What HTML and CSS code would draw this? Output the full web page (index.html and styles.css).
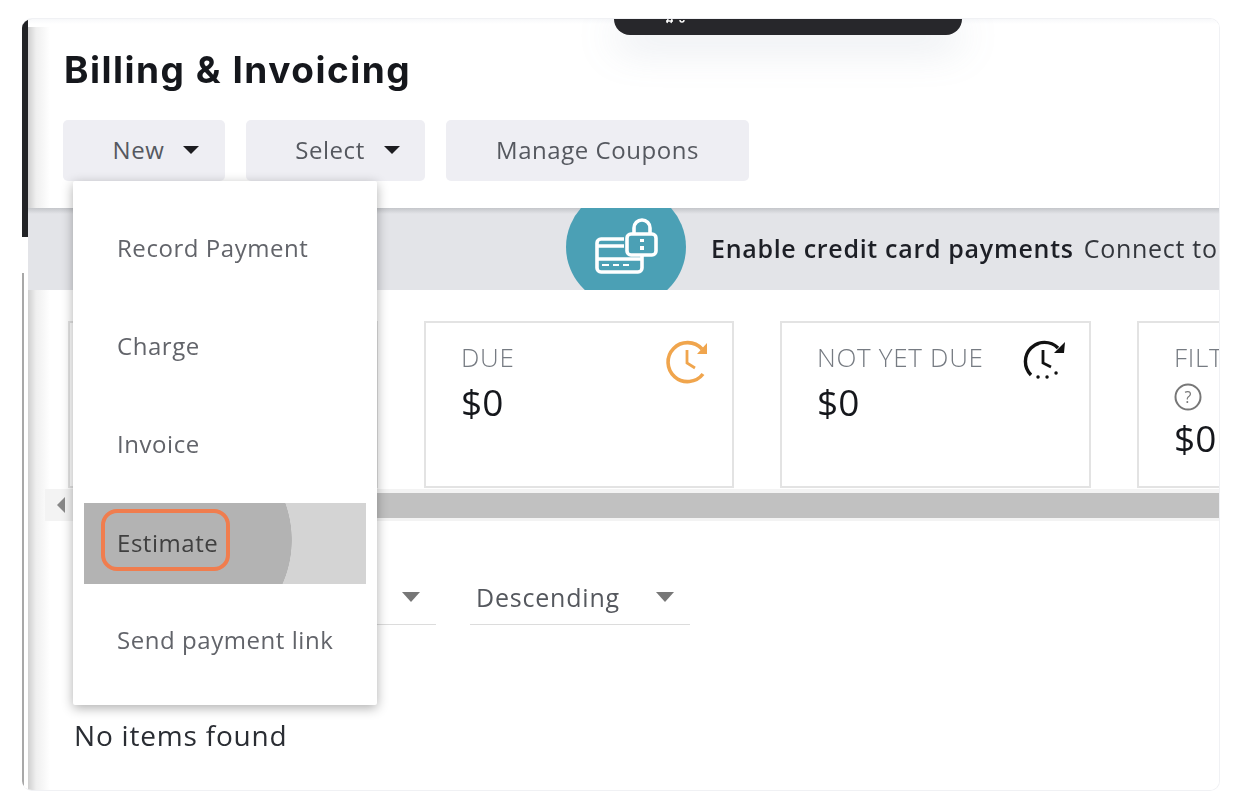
FILE: index.html
```html
<!DOCTYPE html>
<html lang="en">
<head>
<meta charset="utf-8">
<title>Billing &amp; Invoicing</title>
<link rel="stylesheet" href="styles.css">
</head>
<body>
<div class="frame">
  <div class="rail">
    <div class="rail-dark"></div>
    <div class="rail-line"></div>
  </div>
  <main class="main">
    <div class="floating-bar">
      <svg class="floating-marks" width="30" height="6" viewBox="0 0 30 6"><path d="M4 0 3 4M8 0 7 4M2 2H9M16 1a2 2 0 0 0 4 0" fill="none" stroke="#fff" stroke-width="1.4"/></svg>
    </div>
    <h1 class="title">Billing &amp; Invoicing</h1>
    <div class="toolbar">
      <div class="dropdown">
        <button class="btn btn-new">New <span class="caret"></span></button>
        <div class="menu">
          <div class="menu-item">Record Payment</div>
          <div class="menu-item">Charge</div>
          <div class="menu-item">Invoice</div>
          <div class="menu-item menu-item-active"><span class="callout">Estimate</span></div>
          <div class="menu-item">Send payment link</div>
        </div>
      </div>
      <button class="btn btn-select">Select <span class="caret"></span></button>
      <button class="btn btn-coupons">Manage Coupons</button>
    </div>
    <section class="banner">
      <div class="banner-circle">
        <svg width="66" height="58" viewBox="0 0 66 58" fill="none" stroke="#fff" stroke-width="3.6">
          <path d="M31 21H8a4 4 0 0 0-4 4V50a4 4 0 0 0 4 4H45a4 4 0 0 0 4-4V38"/>
          <path d="M4 28H31M4 41H49"/>
          <path d="M9 47H16M20 47H26M30 47H36" stroke-width="2.2"/>
          <rect x="34" y="16" width="29" height="21" rx="4"/>
          <path d="M41 16V10a8 8 0 0 1 16 0V16"/>
          <path d="M49 21V24M49 28V32" stroke-width="4"/>
        </svg>
      </div>
      <p class="banner-text"><strong>Enable credit card payments</strong> Connect to</p>
    </section>
    <div class="cards">
      <div class="card"></div>
      <div class="card">
        <div class="card-head">
          <span class="card-label">DUE</span>
          <svg class="card-icon" width="48" height="48" viewBox="0 0 48 48" fill="none" stroke="#f0a54d" stroke-width="3.6">
            <path d="M38 11A19.500 19.500 0 1 0 39 36"/>
            <path d="M23 12V25L31 30" stroke-width="2.8"/>
            <path d="M43 5V16H33Z" fill="#f0a54d" stroke="none"/>
          </svg>
        </div>
        <div class="card-value">$0</div>
      </div>
      <div class="card card-wide">
        <div class="card-head">
          <span class="card-label">NOT YET DUE</span>
          <svg class="card-icon" width="48" height="48" viewBox="0 0 48 48" fill="none" stroke="#111" stroke-width="3.4">
            <path d="M38 10A19 19 0 1 0 11 37"/>
            <path d="M23 12V25L31 29" stroke-width="2.8"/>
            <path d="M45 4 44 15H34Z" fill="#111" stroke="none"/>
            <path d="M18 39h.1M27 39h.1M36 35h.1" stroke-width="3.400" stroke-linecap="round"/>
          </svg>
        </div>
        <div class="card-value">$0</div>
      </div>
      <div class="card">
        <div class="card-head">
          <span class="card-label">FILT</span>
        </div>
        <svg class="card-help" width="28" height="28" viewBox="0 0 28 28" fill="none"><circle cx="14" cy="14" r="12.500" stroke="#777" stroke-width="2"/><text x="14" y="19.500" text-anchor="middle" class="card-help-mark">?</text></svg>
        <div class="card-value card-value-below">$0</div>
      </div>
    </div>
    <div class="scroll">
      <div class="scroll-btn"><span class="scroll-arrow"></span></div>
      <div class="scroll-thumb"></div>
    </div>
    <div class="sort-row">
      <div class="select select-field"><span></span><span class="select-arrow"></span></div>
      <div class="select select-order"><span>Descending</span><span class="select-arrow"></span></div>
    </div>
    <p class="empty">No items found</p>
  </main>
</div>
</body>
</html>
```
FILE: styles.css
```css
* { box-sizing: border-box; }
html, body { margin: 0; padding: 0; background: #fff; }
body { font-family: "Open Sans", "Liberation Sans", sans-serif; overflow: hidden; height: 802px; }

.frame {
  display: flex;
  width: 1198px;
  height: 773px;
  margin: 18px 0 0 22px;
  border: 1px solid #f0f1f4;
  border-left: 0;
  border-radius: 10px;
  overflow: hidden;
  background: #fff;
  filter: blur(.4px);
}

.rail { flex: none; width: 6px; display: flex; flex-direction: column; }
.rail-dark { height: 218px; background: #222326; }
.rail-line { width: 2px; flex: 1; margin-top: 36px; background: #a8a8a8; }

.main {
  position: relative;
  flex: 1;
  min-width: 0;
  overflow: hidden;
  background:
    linear-gradient(to bottom, #f7f8fa 0, #fff 5px) top left / 100% 8px no-repeat,
    linear-gradient(to right, #cfcfcf 0, #efefef 8px, #fff 22px);
}

.floating-bar {
  position: absolute;
  left: 586px;
  top: 0;
  width: 348px;
  height: 16px;
  padding-left: 50px;
  background: #27272b;
  border-radius: 0 0 16px 16px;
  box-shadow: 0 10px 40px rgba(120, 135, 160, .28);
}
.floating-marks { display: block; }

.title {
  margin: 31px 0 0 36px;
  font-family: Inter, "Open Sans", sans-serif;
  font-size: 37px;
  line-height: 40px;
  font-weight: 700;
  letter-spacing: 1.5px;
  color: #15171c;
}

.toolbar { display: flex; gap: 21px; margin: 30px 0 0 35px; }
.dropdown { position: relative; }
.btn {
  display: flex;
  align-items: center;
  justify-content: center;
  height: 61px;
  padding: 0 0 2px;
  border: 0;
  border-radius: 5px;
  background: #eeeef3;
  font-family: inherit;
  font-size: 24px;
  letter-spacing: .55px;
  color: #55585f;
}
.btn-new { width: 162px; padding-left: 24px; }
.btn-select { width: 179px; padding-left: 24px; }
.btn-coupons { width: 303px; }
.caret {
  width: 0;
  height: 0;
  margin-left: 19px;
  border-left: 8px solid transparent;
  border-right: 8px solid transparent;
  border-top: 8px solid #1c1c20;
}

.menu {
  position: absolute;
  z-index: 5;
  top: 100%;
  left: 10px;
  width: 304px;
  height: 524px;
  padding: 28px 11px 0;
  display: flex;
  flex-direction: column;
  gap: 17px;
  background: #fff;
  box-shadow: 0 3px 12px rgba(0, 0, 0, .32);
  border-radius: 2px;
}
.menu-item {
  flex: none;
  height: 81px;
  display: flex;
  align-items: center;
  padding: 0 0 4px 33px;
  font-size: 24px;
  letter-spacing: .55px;
  color: #62646a;
  white-space: nowrap;
}
.menu-item-active {
  background: radial-gradient(circle 109px at 99px 37px, #b3b3b3 99.500%, #d4d4d4 100%);
  padding: 0 0 0 17px;
  color: #3f3f3f;
}
.callout {
  display: flex;
  align-items: center;
  height: 62px;
  margin-bottom: 8px;
  padding: 5px 8px 0 12px;
  border: 4px solid #f07d4e;
  border-radius: 16px;
}

.banner {
  display: flex;
  align-items: center;
  gap: 25px;
  height: 82px;
  margin-top: 27px;
  padding-left: 538px;
  overflow: hidden;
  background: linear-gradient(to bottom, #c4c6ca 0, #e3e4e8 6px);
}
.banner-circle {
  flex: none;
  width: 120px;
  height: 118px;
  margin: -20px 0 -16px;
  display: flex;
  align-items: center;
  justify-content: center;
  border-radius: 50%;
  background: #4ba0b5;
}
.banner-text {
  flex: none;
  margin: 0 0 2px;
  font-size: 25px;
  letter-spacing: .7px;
  color: #33363c;
  white-space: nowrap;
}
.banner-text strong { margin-right: 3px; font-weight: 600; color: #1d1f26; }

.cards { display: flex; gap: 46px; margin: 31px 0 0 40px; }
.card {
  flex: none;
  width: 310px;
  height: 167px;
  padding: 15px 20px 0 35px;
  border: 2px solid #e3e3e3;
  background: #fff;
}
.card-wide { width: 311px; padding-right: 21px; }
.card-head { display: flex; justify-content: space-between; height: 44px; }
.card-label {
  margin-top: 3px;
  font-size: 26px;
  line-height: 32px;
  font-weight: 300;
  letter-spacing: .7px;
  color: #767b82;
  white-space: nowrap;
}
.card-icon { flex: none; }
.card-value { font-size: 37px; line-height: 40px; color: #15171c; }
.card-value-below { margin-top: 7px; }
.card-help { display: block; margin-top: 1px; }
.card-help-mark { font-family: "Open Sans", sans-serif; font-size: 16px; fill: #777; }

.scroll {
  display: flex;
  height: 32px;
  margin: 1px 0 0 17px;
  background: #f3f3f3;
}
.scroll-btn {
  flex: none;
  width: 28px;
  display: flex;
  align-items: center;
  padding-left: 12px;
}
.scroll-arrow {
  width: 0;
  height: 0;
  border-top: 8px solid transparent;
  border-bottom: 8px solid transparent;
  border-right: 8px solid #888;
}
.scroll-thumb { flex: 1; height: 25px; margin-top: 4px; background: #c1c1c1; }

.sort-row { display: flex; gap: 34px; margin: 54px 0 0 46px; }
.select {
  display: flex;
  align-items: center;
  justify-content: space-between;
  height: 50px;
  padding: 0 16px 6px 6px;
  border-bottom: 1px solid #dcdcdc;
  font-size: 25px;
  letter-spacing: .8px;
  color: #55585e;
}
.select-field { width: 362px; }
.select-order { width: 220px; }
.select-arrow {
  width: 0;
  height: 0;
  border-left: 9px solid transparent;
  border-right: 9px solid transparent;
  border-top: 10px solid #777;
}

.empty {
  margin: 92px 0 0 46px;
  font-size: 28px;
  line-height: 36px;
  letter-spacing: .8px;
  color: #2a2d33;
}
```
